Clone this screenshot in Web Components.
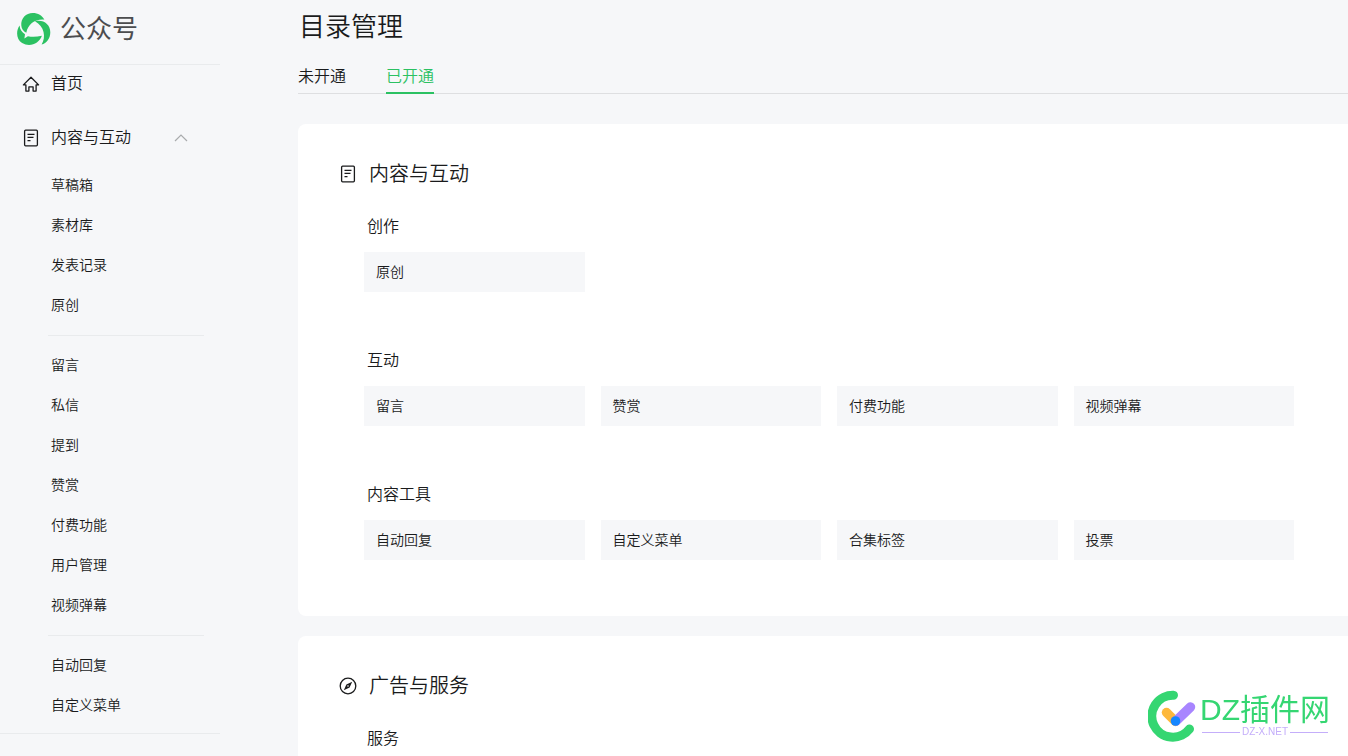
<!DOCTYPE html>
<html lang="zh-CN">
<head>
<meta charset="utf-8">
<title>目录管理 - 公众号</title>
<style>
  html { height: 100%; }
  body {
    margin: 0;
    height: 100%;
    overflow: hidden;
    background: #f6f7f9;
    color: #1a1b1c;
    font-family: "Liberation Sans", "Noto Sans CJK SC", sans-serif;
    font-weight: 350;
    --green: #2bc162;
    --rule: #e9ebed;
    --tile: #f6f7f9;
  }
</style>
</head>
<body>
<mp-app></mp-app>
<script>
const ICONS = {
  home: '<path d="M1.400 9.900 9 2.300l7.600 7.600h-2.500v6.200h-3v-4.300H6.900v4.300h-3V9.900z" stroke-linejoin="round"/>',
  doc: '<rect x="2.6" y="1.2" width="12.8" height="15.6" rx="1"/><path d="M5.500 5.300h7M5.500 8.300h6M5.500 11.600h3"/>',
  compass: '<circle cx="9" cy="9" r="7.8"/><path d="m13.2 4.8-2.6 5.8-5.8 2.6 2.6-5.8z" fill="currentColor" stroke="none"/><circle cx="9" cy="9" r=".8" fill="#fff" stroke="none"/>',
  up: '<path d="m3 12 6-6 6 6" stroke-width="1.2"/>'
};

const define = (name, render) => customElements.define(name, class extends HTMLElement {
  connectedCallback() {
    if (this.shadowRoot) return;
    const template = document.createElement('template');
    template.innerHTML = render(this);
    this.attachShadow({ mode: 'open' }).append(template.content.cloneNode(true));
  }
});

const links = el => (el.getAttribute('items') || '').split(' ').filter(Boolean)
  .map(t => `<a href="#${t}">${t}</a>`).join('');

define('mp-icon', el => `
  <style>
    :host { display: block; width: 18px; height: 18px; flex: none; }
    svg { display: block; width: 100%; height: 100%; }
  </style>
  <svg viewBox="0 0 18 18" fill="none" stroke="currentColor" stroke-width="1.3" aria-hidden="true">${ICONS[el.getAttribute('name')]}</svg>`);

define('mp-brand', () => `
  <style>
    :host { display: block; border-bottom: 1px solid var(--rule); }
    a { display: flex; align-items: center; gap: 9px; height: 58px; padding: 0 0 6px 16px; color: #4c4d4f; text-decoration: none; font-size: 26px; font-weight: 400; }
    svg { width: 35px; height: 34px; }
    span { line-height: 32px; }
  </style>
  <a href="#home">
    <svg viewBox="0 0 35 34" fill="#2bc162" aria-hidden="true">
      <path d="M5.300 13.400C4.700 6.500 10 1 16.700 1c5.300 0 9.600 2.600 11.700 6.700C18.900 6.900 12.100 12.300 10.300 20.800c-3-1.600-4.800-4.200-5-7.400z"/>
      <path d="M3.600 13.600C-.3 19.200.3 27.400 6.100 31c7.800 4.600 17.100.5 19.800-7.300-5.200 1.300-10.100 1.400-14 .5l-3.500 2.200.6-4.200c-3.200-1.900-5.200-4.700-5.400-8.600z"/>
      <path d="M19 9.300c8.200-2 15.300 3 15.300 11 0 6.300-3.700 11.100-8.700 12.300 4.700-7.700 2.700-18.200-6.600-23.300z"/>
    </svg>
    <span>公众号</span>
  </a>`);

define('mp-nav-item', el => `
  <style>
    :host { display: block; }
    a, button { display: flex; align-items: center; gap: 11px; box-sizing: border-box; width: 100%; height: 38px; margin: 0; padding: 0 30px 0 22px; border: 0; background: none; color: inherit; font: inherit; font-size: 16px; text-align: left; text-decoration: none; }
    span { flex: 1; line-height: 24px; }
    .arrow { color: #a9abad; }
  </style>
  ${el.hasAttribute('expanded')
    ? `<button type="button" aria-expanded="true"><mp-icon name="${el.getAttribute('icon')}"></mp-icon><span><slot></slot></span><mp-icon class="arrow" name="up"></mp-icon></button>`
    : `<a href="#home"><mp-icon name="${el.getAttribute('icon')}"></mp-icon><span><slot></slot></span></a>`}`);

define('mp-sub-group', el => `
  <style>
    :host { display: block; }
    :host(:not(:first-of-type))::before { content: ""; display: block; height: 1px; margin: 10px 16px 9px 48px; background: var(--rule); }
    a { display: block; padding-left: 51px; line-height: 40px; font-size: 14px; color: inherit; text-decoration: none; }
  </style>
  ${links(el)}`);

define('mp-sidebar', () => `
  <style>
    :host { display: block; width: 220px; flex: none; }
    nav { display: grid; gap: 16px; padding-bottom: 8px; border-bottom: 1px solid var(--rule); }
    .sub { margin-top: 8px; }
  </style>
  <mp-brand></mp-brand>
  <nav>
    <mp-nav-item icon="home">首页</mp-nav-item>
    <div>
      <mp-nav-item icon="doc" expanded>内容与互动</mp-nav-item>
      <div class="sub">
        <mp-sub-group items="草稿箱 素材库 发表记录 原创"></mp-sub-group>
        <mp-sub-group items="留言 私信 提到 赞赏 付费功能 用户管理 视频弹幕"></mp-sub-group>
        <mp-sub-group items="自动回复 自定义菜单"></mp-sub-group>
      </div>
    </div>
  </nav>`);

define('mp-tabs', () => `
  <style>
    :host { display: flex; gap: 40px; border-bottom: 1px solid #dedfe1; }
    a { line-height: 30px; font-size: 16px; color: inherit; text-decoration: none; border-bottom: 2px solid transparent; margin-bottom: -1px; }
    a[aria-current] { color: var(--green); border-color: var(--green); }
  </style>
  <a href="#closed">未开通</a>
  <a href="#opened" aria-current="page">已开通</a>`);

define('mp-card', el => `
  <style>
    :host { display: block; padding: 36px 54px 56px 66px; background: #fff; border-radius: 8px 0 0 8px; }
    h2 { display: flex; align-items: center; gap: 12px; margin: 0 0 26px -25px; font-size: 20px; line-height: 28px; font-weight: inherit; }
    .body { display: grid; gap: 56px; }
  </style>
  <h2><mp-icon name="${el.getAttribute('icon')}"></mp-icon><span>${el.getAttribute('heading')}</span></h2>
  <div class="body"><slot></slot></div>`);

define('mp-section', el => `
  <style>
    :host { display: block; }
    h3 { margin: 0 0 12px 3px; font-size: 16px; line-height: 26px; font-weight: inherit; }
    .grid { display: grid; grid-template-columns: repeat(4, 1fr); gap: 16px; }
    a { padding-left: 12px; line-height: 40px; font-size: 14px; background: var(--tile); color: inherit; text-decoration: none; }
  </style>
  <h3>${el.getAttribute('heading')}</h3>
  <div class="grid">${links(el)}</div>`);

define('mp-watermark', () => `
  <style>
    :host { position: fixed; right: 18px; bottom: 14px; display: flex; gap: 2px; align-items: center; pointer-events: none; }
    svg { width: 50px; height: 52px; }
    .name { font-size: 30px; line-height: 32px; color: #35d672; white-space: nowrap; font-weight: 400; }
    .site { display: flex; align-items: center; gap: 2px; margin: 0 2px; font-size: 10px; line-height: 12px; color: #c4aefa; }
    .site::before, .site::after { content: ""; flex: 1; height: 1px; background: #c4aefa; }
  </style>
  <svg viewBox="0 0 50 52" fill="none" stroke-linecap="round" aria-hidden="true">
    <path d="M25.500 5.200A21 21 0 1 0 41.500 39" stroke="#35d672" stroke-width="9"/>
    <path d="m18.500 22.500 9 9" stroke="#fdb83c" stroke-width="9.500"/>
    <path d="M28 31 42.500 17" stroke="#a885ff" stroke-width="9.500"/>
    <circle cx="27.500" cy="31" r="4.800" fill="#1687ff"/>
  </svg>
  <div>
    <div class="name">DZ插件网</div>
    <div class="site">DZ-X.NET</div>
  </div>`);

define('mp-app', () => `
  <style>
    :host { display: flex; gap: 78px; min-height: 100%; }
    main { flex: 1; min-width: 0; }
    h1 { margin: 0; padding: 8px 0 16px 1px; font-size: 26px; line-height: 38px; font-weight: inherit; }
    .cards { display: grid; gap: 20px; margin-top: 30px; }
  </style>
  <mp-sidebar></mp-sidebar>
  <main>
    <h1>目录管理</h1>
    <mp-tabs></mp-tabs>
    <div class="cards">
      <mp-card icon="doc" heading="内容与互动">
        <mp-section heading="创作" items="原创"></mp-section>
        <mp-section heading="互动" items="留言 赞赏 付费功能 视频弹幕"></mp-section>
        <mp-section heading="内容工具" items="自动回复 自定义菜单 合集标签 投票"></mp-section>
      </mp-card>
      <mp-card icon="compass" heading="广告与服务">
        <mp-section heading="服务"></mp-section>
      </mp-card>
    </div>
  </main>
  <mp-watermark></mp-watermark>`);
</script>
</body>
</html>
